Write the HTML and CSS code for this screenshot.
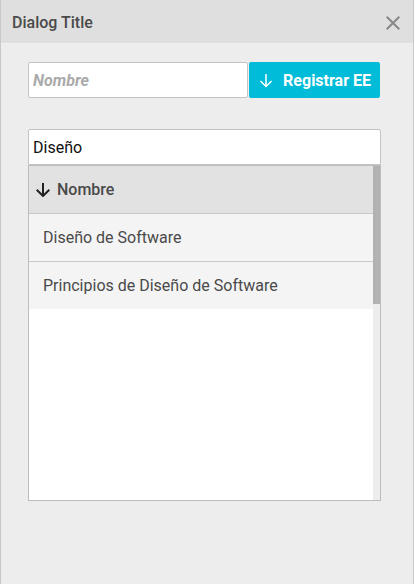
FILE: index.html
```html
<!DOCTYPE html>
<html lang="es">
<head>
<meta charset="utf-8">
<meta name="viewport" content="width=device-width, initial-scale=1">
<title>Dialog Title</title>
<link rel="stylesheet" href="styles.css">
</head>
<body>
<section class="dialog" role="dialog" aria-labelledby="dialog-title">
  <header class="dialog-header">
    <h1 class="dialog-title" id="dialog-title">Dialog Title</h1>
    <button class="close" type="button" aria-label="Cerrar">
      <svg width="14" height="14" viewBox="0 0 14 14" aria-hidden="true"><path d="M.7.7l12.6 12.6M13.3.7L.7 13.3"/></svg>
    </button>
  </header>
  <div class="dialog-body">
    <form class="register">
      <input class="field field-name" type="text" placeholder="Nombre" aria-label="Nombre">
      <button class="register-button" type="button">
        <svg class="arrow" width="14" height="14" viewBox="0 0 14 14" aria-hidden="true"><path d="M7 0v12.500M1.500 7L7 12.500 12.500 7"/></svg>
        <span>Registrar EE</span>
      </button>
    </form>
    <div class="results">
      <input class="field" type="text" value="Diseño" aria-label="Buscar">
      <div class="list">
        <table class="table">
          <thead>
            <tr><th scope="col"><span class="sort"><svg class="arrow" width="14" height="14" viewBox="0 0 14 14" aria-hidden="true"><path d="M7 0v13M.7 6.700L7 13l6.300-6.300"/></svg>Nombre</span></th></tr>
          </thead>
          <tbody>
            <tr><td>Diseño de Software</td></tr>
            <tr><td>Principios de Diseño de Software</td></tr>
          </tbody>
        </table>
        <div class="track" aria-hidden="true"><div class="thumb"></div></div>
      </div>
    </div>
  </div>
</section>
</body>
</html>
```
FILE: styles.css
```css
* {
  box-sizing: border-box;
}

body {
  margin: 0;
  font: 16px/20px Roboto, "Liberation Sans", sans-serif;
  color: #4a4a4a;
  background: #ededed;
}

button,
input {
  font: inherit;
  margin: 0;
}

.dialog {
  min-height: 100vh;
  border: solid #c8c8c8;
  border-width: 0 1px;
}

.dialog-header {
  display: flex;
  align-items: center;
  justify-content: space-between;
  height: 44px;
  padding: 2px 13px 0 11px;
  background: #dfdfdf;
  border-bottom: 1px solid #f1f1f1;
}

.dialog-title {
  margin: 0;
  font-size: 16px;
  font-weight: 500;
}

.close {
  display: flex;
  padding: 0;
  border: 0;
  background: none;
}

.close svg {
  fill: none;
  stroke: #888;
  stroke-width: 2;
}

.dialog-body {
  padding: 18px 32px 24px 27px;
}

.register {
  display: flex;
  gap: 1px;
  margin: 0 1px 31px 0;
}

.field {
  display: block;
  width: 100%;
  height: 36px;
  padding: 0 4px;
  border: 1px solid #c4c4c4;
  border-radius: 2px 2px 0 0;
  background: #fff;
  color: #111;
  outline: 0;
}

.field-name {
  flex: 1;
  min-width: 0;
  border-radius: 2px;
}

.field::placeholder {
  color: #aaa;
  font-style: italic;
  font-weight: 700;
  opacity: 1;
}

.register-button {
  display: flex;
  align-items: center;
  gap: 10px;
  padding: 1px 9px 0 10px;
  border: 0;
  border-radius: 2px;
  background: #00bcd8;
  color: #fff;
  font-weight: 700;
}

.arrow {
  fill: none;
  stroke: currentColor;
  stroke-width: 2;
}

.register-button .arrow {
  stroke-width: 1.5;
}

.list {
  display: flex;
  align-items: flex-start;
  min-height: 336px;
  border: 1px solid #bdbdbd;
  background: #fff;
}

.table {
  flex: 1;
  border-spacing: 0;
}

.table th,
.table td {
  height: 48px;
  padding: 0 14px;
  border-bottom: 1px solid #c8c8c8;
  background: #f4f4f4;
  text-align: left;
  font-weight: 400;
}

.table th {
  padding: 0 7px;
  background: #e2e2e2;
  font-weight: 500;
}

.table tbody tr:last-child td {
  height: 47px;
  border-bottom: 0;
}

.sort {
  display: flex;
  align-items: center;
  gap: 7px;
}

.sort .arrow {
  color: #222;
}

.track {
  align-self: stretch;
  width: 7px;
  background: #ededed;
}

.thumb {
  height: 138px;
  background: #b2b2b2;
}
```
